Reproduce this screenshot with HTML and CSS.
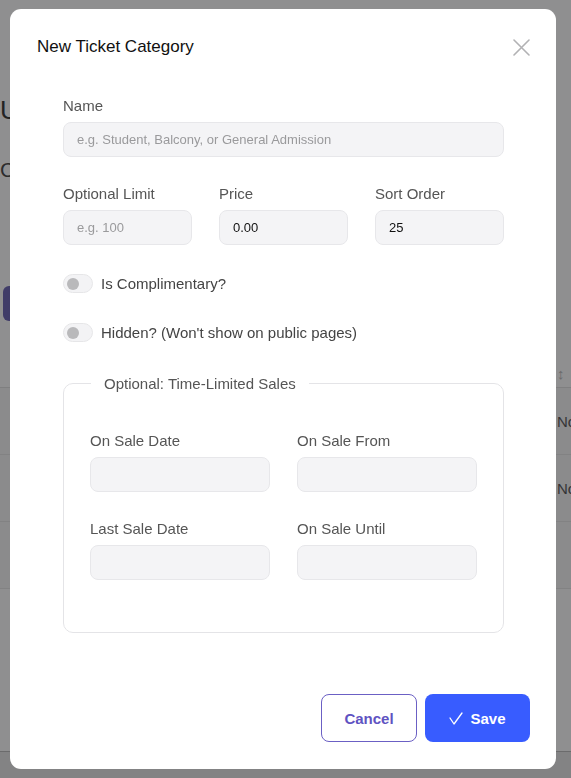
FILE: index.html
```html
<!DOCTYPE html>
<html lang="en">
<head>
    <meta charset="UTF-8">
    <meta name="viewport" content="width=device-width, initial-scale=1.0">
    <title>New Ticket Category</title>
    <link rel="stylesheet" href="styles.css">
</head>
<body>

<div class="page">
    <h1 class="page-title">Upcoming Events</h1>
    <p class="page-sub">Configure ticket categories</p>
    <button class="page-btn">Add Category</button>

    <table class="page-table">
        <colgroup>
            <col class="col-wide"><col class="col-wide"><col class="col-mid"><col class="col-edge">
        </colgroup>
        <thead>
            <tr><th>Category</th><th>Price</th><th>Limit</th><th>&#8597;</th></tr>
        </thead>
        <tbody>
            <tr><td>Adult</td><td>25.00</td><td>100</td><td>None</td></tr>
            <tr><td>Student</td><td>15.00</td><td>50</td><td>None</td></tr>
            <tr><td></td><td></td><td></td><td></td></tr>
        </tbody>
    </table>

    <div class="page-foot"></div>
</div>

<div class="overlay">
    <div class="modal">
        <div class="modal-header">
            <h2 class="modal-title">New Ticket Category</h2>
            <button class="close-btn" aria-label="Close">
                <svg width="17" height="17" viewBox="0 0 17 17" fill="none" xmlns="http://www.w3.org/2000/svg">
                    <path d="M1 1 L16 16 M16 1 L1 16" stroke="#b2b2b4" stroke-width="1.6" stroke-linecap="round"/>
                </svg>
            </button>
        </div>

        <form class="modal-body">
            <div class="field">
                <label class="label">Name</label>
                <input class="input" type="text" placeholder="e.g. Student, Balcony, or General Admission">
            </div>

            <div class="row-3">
                <div class="field">
                    <label class="label">Optional Limit</label>
                    <input class="input" type="text" placeholder="e.g. 100">
                </div>
                <div class="field">
                    <label class="label">Price</label>
                    <input class="input" type="text" value="0.00">
                </div>
                <div class="field">
                    <label class="label">Sort Order</label>
                    <input class="input" type="text" value="25">
                </div>
            </div>

            <label class="toggle-row first">
                <span class="toggle"><span class="knob"></span></span>
                <span class="toggle-text">Is Complimentary?</span>
            </label>

            <label class="toggle-row">
                <span class="toggle"><span class="knob"></span></span>
                <span class="toggle-text">Hidden? (Won't show on public pages)</span>
            </label>

            <fieldset class="timed">
                <legend class="timed-legend">Optional: Time-Limited Sales</legend>
                <div class="row-2">
                    <div class="field">
                        <label class="label">On Sale Date</label>
                        <input class="input" type="text">
                    </div>
                    <div class="field">
                        <label class="label">On Sale From</label>
                        <input class="input" type="text">
                    </div>
                </div>
                <div class="row-2">
                    <div class="field">
                        <label class="label">Last Sale Date</label>
                        <input class="input" type="text">
                    </div>
                    <div class="field">
                        <label class="label">On Sale Until</label>
                        <input class="input" type="text">
                    </div>
                </div>
            </fieldset>
        </form>

        <div class="modal-footer">
            <button class="btn btn-cancel">Cancel</button>
            <button class="btn btn-save">
                <svg width="14" height="13" viewBox="0 0 14 13" fill="none" xmlns="http://www.w3.org/2000/svg">
                    <path d="M1 6 L5 12 L13 1" stroke="#fff" stroke-width="1.3" stroke-linecap="round" stroke-linejoin="round"/>
                </svg>
                Save
            </button>
        </div>
    </div>
</div>

</body>
</html>
```

FILE: styles.css
```css
html, body {
    margin: 0;
    padding: 0;
    height: 100%;
    font-family: "Liberation Sans", Arial, sans-serif;
    background: #fff;
    overflow: hidden;
}

/* page behind the dialog */
.page {
    display: flex;
    flex-direction: column;
    height: 100%;
    padding-top: 90px;
    box-sizing: border-box;
}

.page-title {
    margin: 0;
    font-size: 26px;
    line-height: 40px;
    font-weight: normal;
    color: #333;
}

.page-sub {
    margin: 20px 0 0;
    font-size: 21px;
    line-height: 40px;
    color: #444;
}

.page-btn {
    align-self: flex-start;
    margin: 96px 0 0 3px;
    height: 35px;
    padding: 0 20px;
    border: none;
    border-radius: 6px;
    background: #6a62b4;
    color: #fff;
    font-family: inherit;
    font-size: 15px;
}

.page-table {
    margin-top: 38px;
    width: 100%;
    table-layout: fixed;
    border-collapse: collapse;
    font-size: 15px;
    color: #555;
}

.col-wide { width: 150px; }
.col-mid { width: 257px; }
.col-edge { width: 14px; }

.page-table th {
    height: 28px;
    padding: 0;
    text-align: left;
    font-weight: normal;
    color: #bbb;
    border-bottom: 1px solid #e0e0e0;
}

.page-table td {
    height: 66px;
    padding: 0;
    text-align: left;
    white-space: nowrap;
    border-bottom: 1px solid #e6e6e6;
    background: #f7f7f7;
}

.page-table th:first-child,
.page-table td:first-child {
    padding-left: 24px;
}

.page-foot {
    margin-top: auto;
    height: 26px;
    border-top: 1px solid #bbb;
    background: #e8e8e8;
}

/* dialog */
.overlay {
    position: fixed;
    inset: 0;
    display: flex;
    padding: 9px 15px 9px 10px;
    background: rgba(17, 17, 20, 0.47);
}

.modal {
    flex: 1;
    min-width: 0;
    display: flex;
    flex-direction: column;
    background: #fff;
    border-radius: 11px;
}

.modal-header {
    display: flex;
    justify-content: space-between;
    align-items: center;
    padding: 28px 26px 0 27px;
}

.modal-title {
    margin: 0;
    font-size: 17px;
    line-height: 20px;
    font-weight: normal;
    color: #111;
}

.close-btn {
    display: flex;
    padding: 0;
    border: none;
    background: none;
    cursor: pointer;
}

.modal-body {
    flex: 1;
    display: flex;
    flex-direction: column;
    padding: 40px 52px 0 53px;
}

.field {
    display: flex;
    flex-direction: column;
    gap: 8px;
    min-width: 0;
}

.label {
    font-size: 15px;
    line-height: 17px;
    color: #555;
}

.input {
    width: 100%;
    min-width: 0;
    height: 35px;
    box-sizing: border-box;
    padding: 0 13px;
    border: 1px solid #e7e7ea;
    border-radius: 8px;
    background: #f4f4f6;
    font-family: inherit;
    font-size: 13px;
    color: #111;
    outline: none;
}

.input::placeholder {
    color: #9a9a9c;
}

.row-3 {
    display: grid;
    grid-template-columns: repeat(3, minmax(0, 1fr));
    gap: 27px;
    margin-top: 28px;
}

.toggle-row {
    display: flex;
    align-items: center;
    gap: 8px;
    margin-top: 30px;
}

.toggle-row.first {
    margin-top: 29px;
}

.toggle {
    display: flex;
    align-items: center;
    width: 30px;
    height: 19px;
    box-sizing: border-box;
    padding-left: 3px;
    border: 1px solid #e6e6e8;
    border-radius: 10px;
    background: #f3f3f5;
}

.knob {
    width: 12px;
    height: 12px;
    border-radius: 50%;
    background: #b9b9bb;
}

.toggle-text {
    font-size: 15px;
    line-height: 17px;
    color: #444;
}

.timed {
    margin: 33px 0 0;
    padding: 40px 26px 52px;
    border: 1px solid #e4e4e7;
    border-radius: 10px;
    min-width: 0;
}

.timed-legend {
    margin-left: 1px;
    padding: 0 13px;
    font-size: 15px;
    line-height: 17px;
    color: #555;
}

.row-2 {
    display: grid;
    grid-template-columns: repeat(2, minmax(0, 1fr));
    gap: 27px;
}

.row-2 + .row-2 {
    margin-top: 28px;
}

.modal-footer {
    display: flex;
    justify-content: flex-end;
    gap: 8px;
    padding: 0 26px 27px;
}

.btn {
    display: flex;
    align-items: center;
    justify-content: center;
    gap: 7px;
    height: 48px;
    box-sizing: border-box;
    border-radius: 8px;
    font-family: inherit;
    font-size: 15px;
    font-weight: bold;
    cursor: pointer;
}

.btn-cancel {
    width: 96px;
    border: 1px solid #6b60c4;
    background: #fff;
    color: #5f53c2;
}

.btn-save {
    width: 105px;
    border: none;
    background: #385cff;
    color: #fff;
}
```
